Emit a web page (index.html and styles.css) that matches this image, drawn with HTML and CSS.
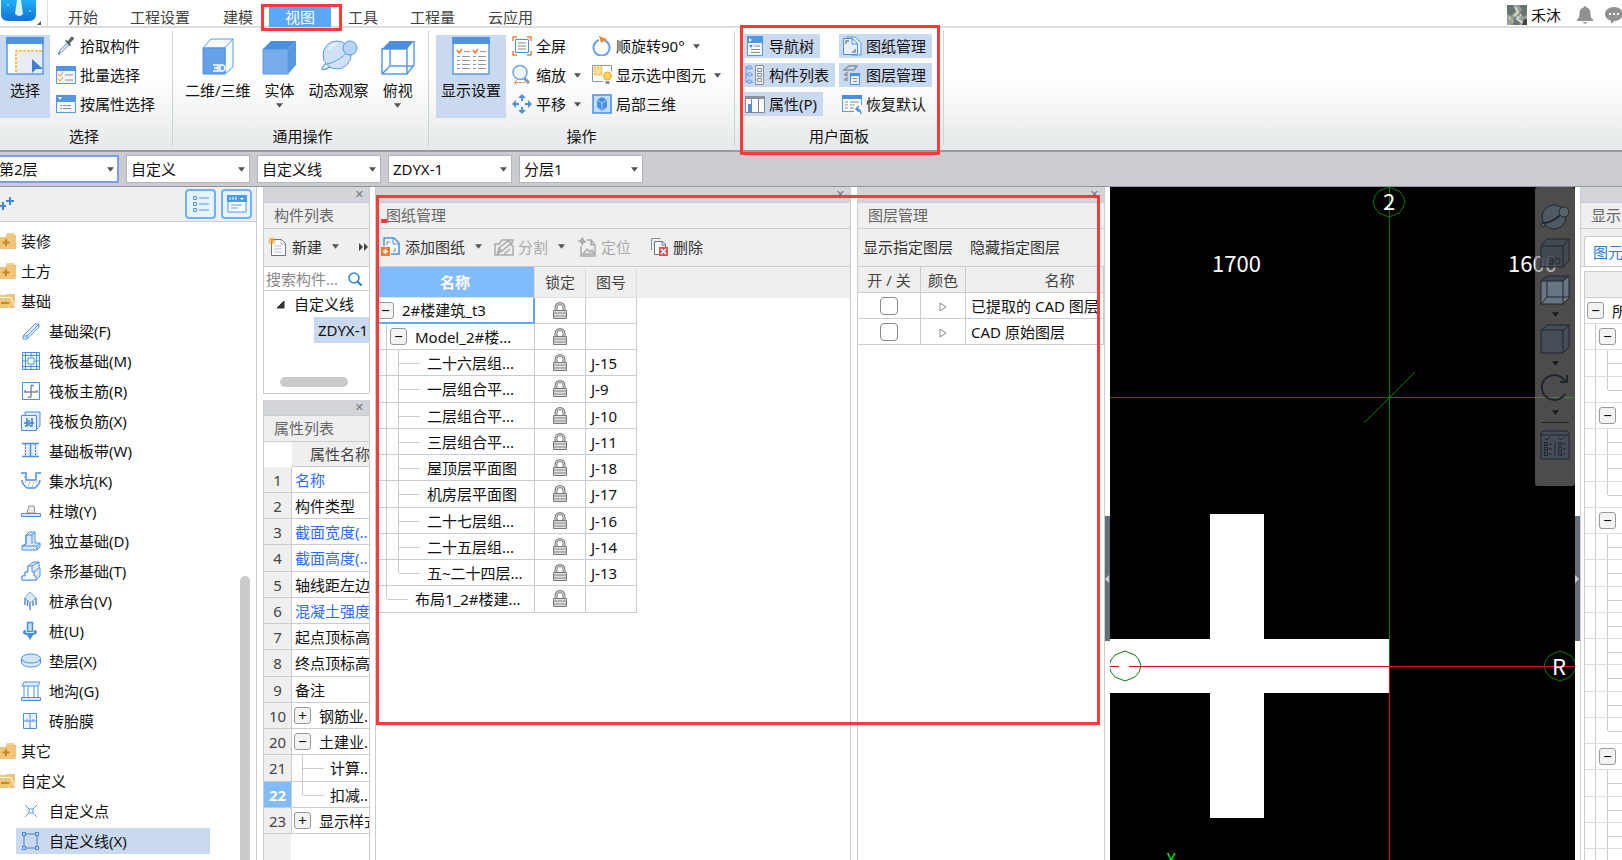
FILE: index.html
```html
<!DOCTYPE html>
<html lang="zh-CN">
<head>
<meta charset="utf-8">
<title>图纸管理</title>
<link rel="stylesheet" href="styles.css">
</head>
<body>
<svg class="defs" aria-hidden="true">
  <symbol id="caret" viewBox="0 0 8 5"><path d="M0 0h8L4 5z" fill="#555"/></symbol>
  <symbol id="lock" viewBox="0 0 16 18"><path d="M4 9V5.500a4 4 0 0 1 8 0V9" fill="none" stroke="#777" stroke-width="3"/><path d="M4 9V5.500a4 4 0 0 1 8 0V9" fill="none" stroke="#e8e8e8" stroke-width="1"/><path d="M1.500 8.500h13v8h-13z" fill="#ddd" stroke="#777"/><path d="M2 11h12M2 14h12" stroke="#888"/></symbol>
  <symbol id="folder" viewBox="0 0 16 17"><path d="M7 0h7l1 2H6z" fill="#f1d08f"/><path d="M0 4h5l2-2h9v13q0 1-1 1H0z" fill="#efc679"/><path d="M6 6v7M2.500 9.500h7" stroke="#c28a28" stroke-width="2"/></symbol>
  <symbol id="folder-open" viewBox="0 0 16 17"><path d="M0 2h6l1-1h8v14H0z" fill="#efc679"/><path d="M0 4.500h11l4 9" fill="none" stroke="#fff"/><path d="M1 10h8" stroke="#c28a28" stroke-width="2"/></symbol>
  <symbol id="orbit" viewBox="0 0 38 32"><path d="M8 22C0 28 0 32 8 28 18 24 28 16 33 10" fill="none" stroke="#6fa7e2" stroke-width="1.500"/><circle cx="17" cy="15" r="14" fill="#cfe2f8" stroke="#5a9ae0"/><path d="M7 24C17 22 26 15 30 8" fill="none" stroke="#5a9ae0"/><circle cx="30" cy="8" r="7" fill="#b7d4f5" stroke="#5a9ae0"/><path d="M9 10q3-6 8-6" stroke="#fff" stroke-width="2" fill="none" opacity=".7"/></symbol>
</svg>

<header class="titlebar">
  <div class="logo"><svg width="46" height="27" viewBox="0 0 46 27"><defs><linearGradient id="lg" x1="0" y1="0" x2="0" y2="1"><stop offset="0" stop-color="#1fb0f5"/><stop offset="1" stop-color="#1270d8"/></linearGradient></defs><path d="M1 0h35v14q0 7-7 7H8q-7 0-7-7z" fill="url(#lg)"/><path d="M17 0h4l2 14q-3 4-8 0z" fill="#d9f1ff"/><circle cx="8" cy="5" r="1" fill="#7fd4ff"/><circle cx="30" cy="11" r="1" fill="#7fd4ff"/><path d="M41 21v4h-4z" fill="#555"/></svg></div>
  <nav class="tabs">
    <button class="tab">开始</button>
    <button class="tab">工程设置</button>
    <button class="tab">建模</button>
    <button class="tab active">视图<span class="mark mark-tab"></span></button>
    <button class="tab">工具</button>
    <button class="tab">工程量</button>
    <button class="tab">云应用</button>
  </nav>
  <div class="user">
    <svg width="20" height="20" viewBox="0 0 20 20"><path fill="#96a098" d="M0 0h20v20H0z"/><path d="M0 0h6l3 6-5 5-4-2zM12 0l3 5-3 3 5 4 3-3V0zM7 12l5 2 1 6H6z" fill="#68756f"/><path d="M8 2l3 5-4 4M14 9l-4 5 6 4M2 12l4 5" stroke="#d5dbd2" stroke-width="2" fill="none"/><path d="M3 12l4 3-3 3zM9 9h4v3z" fill="#a8a57c"/><path d="M17 14h3v6h-5z" fill="#3d4742"/></svg>
    <span class="user-name">禾沐</span>
    <button class="plain" aria-label="通知"><svg width="16" height="18" viewBox="0 0 16 18"><path d="M8 0q1.500 0 1.500 1.500C13 2.500 13.500 5 13.500 8q0 4 2.500 5.500V15H0v-1.500Q2.500 12 2.500 8c0-3 .5-5.500 4-6.500Q6.500 0 8 0zM5.500 16h5Q8 19.500 5.500 16z" fill="#919191"/></svg></button>
    <button class="plain chat" aria-label="消息"><svg width="17" height="18" viewBox="0 0 17 18"><path d="M9 1c5 0 9 3 9 7s-4 7-9 7l-3 3v-3.500C2.500 14 0 11 0 8c0-4 4-7 9-7z" fill="#919191"/><path d="M4 8h2M8 8h2M12 8h2" stroke="#fff" stroke-width="2"/></svg></button>
  </div>
</header>

<section class="ribbon">
  <div class="group g-select">
    <div class="group-body">
      <button class="big on big-select"><svg width="38" height="38" viewBox="0 0 38 38"><path d="M1 1h36v36H1z" fill="#fff" stroke="#5b9ae2" stroke-width="1.500"/><path d="M0 0h38v7H0z" fill="#4f93e3"/><path d="M11 15h25v21H11z" fill="#e8ecf6"/><path d="M10 35V14h26" fill="none" stroke="#f7b21c" stroke-width="1.500" stroke-dasharray="3 1"/><path d="M26 22v14l4-4h7z" fill="#3d82d3"/></svg><span>选择</span></button>
      <div class="stack">
        <button class="small"><svg width="20" height="20" viewBox="0 0 20 20"><path d="M3 17l1-3 7-7 2 2-7 7z" fill="#cfe0f3" stroke="#7f9fc0"/><path d="M9 5l1-1 2 1 3-4q3-1 3 2l-4 4 1 2-1 1z" fill="#59636e"/><path d="M2 18l2-1" stroke="#4a90e2" stroke-width="2"/></svg>拾取构件</button>
        <button class="small"><svg width="20" height="18" viewBox="0 0 20 18"><path d="M.5.5h19v17H.5z" fill="#f4f6f8" stroke="#5b9ae2"/><path d="M0 0h20v5H0z" fill="#5396e5"/><path d="M2 8l2 2 3-4M2 13l2 2 3-4" fill="none" stroke="#f08a2c"/><path d="M9 9h8M9 14h8" stroke="#8a8f96"/></svg>批量选择</button>
        <button class="small"><svg width="20" height="18" viewBox="0 0 20 18"><path d="M.5.5h19v17H.5z" fill="#f4f6f8" stroke="#5b9ae2"/><path d="M0 0h20v7H0z" fill="#5396e5"/><path d="M2 2h4L4 5z" fill="#fff"/><path d="M4 10.500h2M7 10.500h8M4 13.500h2M7 13.500h8" stroke="#8a8f96"/></svg>按属性选择</button>
      </div>
    </div>
    <h2>选择</h2>
  </div>

  <div class="group g-common">
    <div class="group-body">
      <button class="big"><svg width="38" height="38" viewBox="0 0 38 38"><path d="M12 2L4 11h22v26l8-7V2z" fill="#f4f9ff" stroke="#5b9ae2"/><path d="M4 11h22v26H4z" fill="#65a2ea" stroke="#4a90e2"/><path d="M26 11l8-9" stroke="#5b9ae2"/><path d="M14 28h5v6h-5M15 31h4M21 28h2q3 0 3 3t-3 3h-2z" fill="none" stroke="#fff" stroke-width="1.500"/></svg><span>二维/三维</span></button>
      <button class="big"><svg width="38" height="38" viewBox="0 0 38 38"><path d="M2 12h25v25H2z" fill="#78adec" stroke="#5a99e0"/><path d="M2 12l8-8h25l-8 8z" fill="#4a8fdf"/><path d="M27 12l8-8v24l-8 9z" fill="#5797e2"/></svg><span>实体</span><svg class="caret"><use href="#caret"/></svg></button>
      <button class="big"><svg width="38" height="38" viewBox="0 -3 38 38"><use href="#orbit" width="38" height="32"/></svg><span>动态观察</span></button>
      <button class="big"><svg width="38" height="38" viewBox="0 0 38 38"><path d="M3 12h25v25H3zM28 37l7-9V4M3 37l8-8h24M11 12v17" fill="none" stroke="#5b9ae2" stroke-width="1.500"/><path d="M3 12l8-8h24l-7 8z" fill="#4a8fdf"/></svg><span>俯视</span><svg class="caret"><use href="#caret"/></svg></button>
    </div>
    <h2>通用操作</h2>
  </div>

  <div class="group g-op">
    <div class="group-body">
      <button class="big on big-display"><svg width="38" height="38" viewBox="0 0 38 38"><path d="M1 1h36v36H1z" fill="#fdfdfd" stroke="#5b9ae2" stroke-width="1.500"/><path d="M0 0h38v7H0z" fill="#4f93e3"/><path d="M5 13l2 3 3-4M21 13l2 3 3-4" stroke="#f0813c" fill="none" stroke-width="1.500"/><path d="M12 14.500h6M28 14.500h6M5 19.500h3M10 19.500h8M21 19.500h3M26 19.500h8M5 23.500h3M10 23.500h8M21 23.500h3M26 23.500h8M5 27.500h3M10 27.500h8M21 27.500h3M26 27.500h8M5 31.500h3M10 31.500h8M21 31.500h3M26 31.500h8" stroke="#999"/></svg><span>显示设置</span></button>
      <div class="stack">
        <button class="small"><svg width="20" height="20" viewBox="0 0 20 20"><path d="M1 5V1h4M15 1h4v4M19 15v4h-4M5 19H1v-4" fill="none" stroke="#f0813c" stroke-width="1.500"/><path d="M3.500 3.500h13v13h-13z" fill="#fff" stroke="#4a90e2"/><path d="M6 7h8M6 10h8M6 13h8" stroke="#888"/></svg>全屏</button>
        <button class="small"><svg width="20" height="20" viewBox="0 0 20 20"><path d="M12 13l5 5" stroke="#8c949c" stroke-width="3"/><circle cx="8" cy="7.500" r="7" fill="#eef5fd" stroke="#6da7e6" stroke-width="1.500"/><path d="M3 17.500h10M5 15l-3 2.500L5 20" fill="none" stroke="#f0813c" stroke-dasharray="3 1"/></svg>缩放<svg class="caret"><use href="#caret"/></svg></button>
        <button class="small"><svg width="20" height="20" viewBox="0 0 20 20"><path d="M10 0l4 4H6zM10 20l4-4H6zM0 10l4-4v8zM20 10l-4-4v8z" fill="#4a90e2"/><path d="M10 3v4M10 13v4M3 10h4M13 10h4" stroke="#4a90e2" stroke-width="2"/></svg>平移<svg class="caret"><use href="#caret"/></svg></button>
      </div>
      <div class="stack stack-rotate">
        <button class="small"><svg width="20" height="20" viewBox="0 0 20 20"><path d="M12 4a8 8 0 1 1-5 0" fill="none" stroke="#6aa5e6" stroke-width="2"/><path d="M7 0l8 3-6 4z" fill="#f58a1f"/></svg>顺旋转90°<svg class="caret"><use href="#caret"/></svg></button>
        <button class="small"><svg width="20" height="20" viewBox="0 0 20 20"><path d="M.5.500v16h11M.5.500h19v6" fill="none" stroke="#8a9aac"/><path d="M2 2h8v8H2z" fill="#fddc92" stroke="#f7b21c" stroke-dasharray="2 1"/><circle cx="15.500" cy="11" r="4" fill="#fbd45c" stroke="#f0a91c"/><path d="M13.500 16h4v3h-4z" fill="#8a8f96"/></svg>显示选中图元<svg class="caret"><use href="#caret"/></svg></button>
        <button class="small"><svg width="20" height="20" viewBox="0 0 20 20"><path d="M1 1h18v18H1z" fill="#c4dcf6" stroke="#4a90e2" stroke-width="1.500"/><path d="M10 3l5 3v7l-5 4-5-4V6z" fill="#4a90e2"/><path d="M5 6l5 3 5-3M10 9v8" stroke="#a8ccf5" fill="none"/></svg>局部三维</button>
      </div>
    </div>
    <h2>操作</h2>
  </div>

  <div class="group g-user">
    <div class="group-body">
      <div class="stack">
        <button class="small on"><svg width="20" height="20" viewBox="0 0 20 20"><path d="M2.500.5h15v19h-15z" fill="#f4f6f8" stroke="#5b9ae2"/><path d="M2 0h16v7H2z" fill="#5396e5"/><path d="M4 2l3 2-3 2z" fill="#fff"/><path d="M4 9h4l-2 3z" fill="#4a90e2"/><path d="M9 10h6M6 13.500h9M6 16.500h9" stroke="#8a8f96"/></svg>导航树</button>
        <button class="small on"><svg width="20" height="20" viewBox="0 0 20 20"><path d="M1 1v16M1 3h7M1 10h7M1 17h7" stroke="#5b9ae2" fill="none"/><path d="M3 1h3v3H3zM3 8h3v3H3zM3 15h3v3H3z" fill="#d9e8fa" stroke="#5b9ae2"/><path d="M10.500.5h8v19h-8z" fill="#e9eef4" stroke="#8a929c"/><path d="M12.500 3.500h4v3h-4zM12.500 8.500h4v3h-4zM12.500 13.500h4v3h-4z" fill="none" stroke="#8a929c"/></svg>构件列表</button>
        <button class="small on"><svg width="20" height="20" viewBox="0 0 20 20"><path d="M.5 2.500h19v16H.5z" fill="#f8f8f8" stroke="#7f8790"/><path d="M0 2h20v3H0z" fill="#8a929c"/><path d="M6.500 5v14M13.500 5v14" stroke="#7f8790"/><path d="M3 10h3v8H3z" fill="#4a90e2"/></svg>属性(P)</button>
      </div>
      <div class="stack stack-right">
        <button class="small on"><svg width="20" height="20" viewBox="0 0 20 20"><path d="M4 1h9l6 6v12H9" fill="#e6effa" stroke="#5b9ae2"/><path d="M1.500 2.500h9l5 5v11h-14z" fill="#e6effa" stroke="#4a90e2"/><path d="M4 8V5h3M13 13v3h-3" fill="none" stroke="#7b8794" stroke-width="1.500"/><path d="M10 2v6h6" fill="none" stroke="#4a90e2"/></svg>图纸管理</button>
        <button class="small on"><svg width="20" height="20" viewBox="0 0 20 20"><path d="M2 5l5-4h8l-3 4zM2 10l4-3M2 15l4-3M2 5h6M2 10h4M2 15h4" fill="none" stroke="#8a929c" stroke-width="1.500"/><path d="M8.500 8.500h9v11h-9z" fill="#eef5fd" stroke="#4a90e2"/><path d="M8 8h10v3H8zM11 13h4v1h-4zM11 16h4v1h-4z" fill="#4a90e2"/></svg>图层管理</button>
        <button class="small"><svg width="20" height="20" viewBox="0 0 20 20"><path d="M.5 1.500h19v16H.5z" fill="#f8fbff" stroke="#5b9ae2"/><path d="M0 1h20v4H0z" fill="#4a90e2"/><path d="M3 8h3M8 8h9M3 11h3M8 11h5M3 14h3M8 14h4" stroke="#8a8f96"/><path d="M12 11h8v9h-8z" fill="#fff"/><path d="M19 20q0-5-5-5M17 12l-3 3 3 3" fill="none" stroke="#4a90e2" stroke-width="1.500"/></svg>恢复默认</button>
      </div>
    </div>
    <h2>用户面板</h2>
    <span class="mark mark-user"></span>
  </div>
</section>

<section class="combos">
  <label class="combo focus"><select aria-label="楼层"><option>第2层</option></select><svg class="caret"><use href="#caret"/></svg></label>
  <label class="combo"><select aria-label="类别"><option>自定义</option></select><svg class="caret"><use href="#caret"/></svg></label>
  <label class="combo"><select aria-label="构件类型"><option>自定义线</option></select><svg class="caret"><use href="#caret"/></svg></label>
  <label class="combo"><select aria-label="构件"><option>ZDYX-1</option></select><svg class="caret"><use href="#caret"/></svg></label>
  <label class="combo"><select aria-label="分层"><option>分层1</option></select><svg class="caret"><use href="#caret"/></svg></label>
</section>

<main class="workspace">
  <aside class="nav">
    <div class="nav-tools">
      <svg class="plus" width="14" height="14" viewBox="0 0 14 14"><path d="M10 0v8M6 4h8M3 5v8M0 9h6" stroke="#3f87da" stroke-width="2"/></svg>
      <button class="view-btn" aria-label="列表视图"><svg width="18" height="18" viewBox="0 0 18 18"><path d="M1.500 1.500h3v3h-3zM1.500 7.500h3v3h-3zM1.500 13.500h3v3h-3zM7 3h10M7 9h10M7 15h10" fill="none" stroke="#4a9af0"/></svg></button>
      <button class="view-btn" aria-label="面板视图"><svg width="20" height="18" viewBox="0 0 20 18"><path d="M1 1h18v16H1z" fill="#fff" stroke="#4a9af0"/><path d="M0 0h20v7H0z" fill="#4a9af0"/><path d="M3 2v3M6 2v3M9 2v3" stroke="#fff"/><path d="M13 3h4l-2 2z" fill="#fff"/><path d="M4 10h11M4 13h7" stroke="#4a9af0"/></svg></button>
    </div>
    <ul class="nav-list">
      <li class="cat"><svg><use href="#folder"/></svg>装修</li>
      <li class="cat"><svg><use href="#folder"/></svg>土方</li>
      <li class="cat"><svg><use href="#folder-open"/></svg>基础</li>
      <li><svg viewBox="0 0 20 20"><path d="M2 15L14 3h4v3L6 18H2zM2 15h4v3M6 15L18 3" fill="#e4effb" stroke="#5b9ae2"/></svg>基础梁(F)</li>
      <li><svg viewBox="0 0 20 20"><path d="M1.500 1.500h17v17h-17zM4.500 1v18M15.500 1v18M1 4.500h18M1 15.500h18M10 1v5M10 14v5M1 10h5M14 10h5" fill="#f2f7fd" stroke="#4a90e2"/><path d="M7 7h6v6H7z" fill="#fff" stroke="#4a90e2"/></svg>筏板基础(M)</li>
      <li><svg viewBox="0 0 20 20"><path d="M1.500 1.500h17v17h-17z" fill="#fff" stroke="#4a90e2"/><path d="M4 9v2h12V9M13 5q-3-2-3 1v9q0 2-3 1" fill="none" stroke="#7f8790" stroke-width="1.500"/></svg>筏板主筋(R)</li>
      <li><svg viewBox="0 0 20 20"><path d="M4 4V1h15v14l-3 3" fill="#dce9f8" stroke="#4a90e2"/><path d="M.5 4.500h15v15H.5z" fill="#e9f2fc" stroke="#4a90e2"/><path d="M3 12h4M9 12h4M6 7v8H4M11 7v8H9M8 9v6" fill="none" stroke="#3b80d0" stroke-width="1.500"/></svg>筏板负筋(X)</li>
      <li><svg viewBox="0 0 20 20"><path d="M3 3h14v12H3z" fill="#e3eefa"/><path d="M1 2.500h17M1 15.500h17M9.500 3v12" stroke="#4a90e2" stroke-width="1.500"/><path d="M4.500 3v12M14.500 3v12" stroke="#6a7a8c" stroke-dasharray="2 1"/></svg>基础板带(W)</li>
      <li><svg viewBox="0 0 20 20"><path d="M0 2h5v7h10V2h5M1 9q0 4 5 8h8q5-4 5-8" fill="none" stroke="#4a90e2" stroke-width="1.500"/><path d="M4 11h1M8 12h1M12 12h1M15 11h1M7 14h1M11 15h1M3 6h1" stroke="#6a7a8c"/></svg>集水坑(K)</li>
      <li><svg viewBox="0 0 20 20"><path d="M8 5h5l1 7H6z" fill="#eee" stroke="#8a929c"/><path d="M.5 12.500h19v3H.5z" fill="#d5e6f9" stroke="#4a90e2"/></svg>柱墩(Y)</li>
      <li><svg viewBox="0 0 20 20"><path d="M5 13V4l3-3h6v11h5v4l-3 3H1v-4z" fill="#dbe9f9" stroke="#4a90e2"/><path d="M5 4h6v9M11 4l3-3M1 15h15v4M16 15l3-3M5 4v9l-4 2" fill="none" stroke="#4a90e2"/></svg>独立基础(D)</li>
      <li><svg viewBox="0 0 20 20"><path d="M1 19v-4h3v-4h3V5l5-4h6v5l1 1v8l-4 4z" fill="#dbe9f9" stroke="#4a90e2"/><path d="M1 19v-4h3v-4h3V5h4v6h2v4h2v4z" fill="#fff" stroke="#4a90e2"/><path d="M11 5l7-4M13 11l5-4" fill="none" stroke="#4a90e2"/></svg>条形基础(T)</li>
      <li><svg viewBox="0 0 20 20"><path d="M9 1l6 6-6 5-5-5z" fill="#dbe9f9" stroke="#7aa9e0"/><path d="M4 7v7M6.500 9v6M9 12v7M12 10v5M15 7v7" stroke="#5b8fce" stroke-width="1.500"/></svg>桩承台(V)</li>
      <li><svg viewBox="0 0 20 20"><path d="M6.500 1.500h5v9h-5z" fill="#c5dcf6" stroke="#4a90e2" stroke-width="1.500"/><path d="M2 11q0-2 3-2v3h8V9q3 0 3 2-1 3-4 3l-3 5-3-5q-4 0-4-3z" fill="#4a90e2"/></svg>桩(U)</li>
      <li><svg viewBox="0 0 20 20"><path d="M.5 8v4q2 4 9.500 4t9.500-4V8" fill="#dbe9f9" stroke="#4a90e2"/><ellipse cx="10" cy="7.500" rx="9.500" ry="4.500" fill="#d3e5f9" stroke="#4a90e2"/></svg>垫层(X)</li>
      <li><svg viewBox="0 0 20 20"><path d="M3 1h16l-2 4H1zM3 5v12M7 5v12M13 5v12M17 5v12" fill="#e3eefa" stroke="#4a90e2"/><path d="M.5 16.500h19v3H.5z" fill="#d5e6f9" stroke="#4a90e2"/></svg>地沟(G)</li>
      <li><svg viewBox="0 0 20 20"><path d="M2.500 2.500h13v15h-13zM2.500 10h13M9 2v8M9 10v8" fill="#eef5fd" stroke="#4a90e2"/><path d="M5 9h2M11 9h2" stroke="#4a90e2"/></svg>砖胎膜</li>
      <li class="cat"><svg><use href="#folder"/></svg>其它</li>
      <li class="cat"><svg><use href="#folder-open"/></svg>自定义</li>
      <li><svg viewBox="0 0 20 20"><path d="M8 8h4v4H8zM4 4l4 4M16 4l-4 4M4 16l4-4M16 16l-4-4" fill="none" stroke="#5b9ae2"/></svg>自定义点</li>
      <li class="selected"><svg viewBox="0 0 20 20"><path d="M3 3h13v14H3z" fill="none" stroke="#4a7fc4"/><path d="M1.500 1.500h3v3h-3zM14.500 1.500h3v3h-3zM1.500 15.500h3v3h-3zM14.500 15.500h3v3h-3z" fill="#cfe2f8" stroke="#3b80d0"/></svg>自定义线(X)</li>
    </ul>
    <div class="vscroll"></div>
  </aside>

  <div class="side">
    <section class="panel members">
      <div class="grip"><button class="close" aria-label="关闭">✕</button></div>
      <h3>构件列表</h3>
      <div class="tools">
        <button class="tool"><svg width="20" height="20" viewBox="0 0 20 20"><path d="M3.500 2.500h10l4 4v12h-14z" fill="#fdfdfd" stroke="#6d757e"/><path d="M13 3v4h4M6 9h8M6 12h8M6 15h8" fill="none" stroke="#b8bec5"/><path d="M4 0v8M0 4h8M1 1l6 6M7 1L1 7" stroke="#f59a22"/></svg>新建<svg class="caret"><use href="#caret"/></svg></button>
        <svg class="more" width="10" height="8" viewBox="0 0 10 8"><path d="M0 0l4 4-4 4zM5 0l4 4-4 4z" fill="#444"/></svg>
      </div>
      <div class="search"><input type="text" placeholder="搜索构件..." aria-label="搜索构件"><svg width="14" height="14" viewBox="0 0 14 14"><circle cx="6" cy="6" r="5" fill="none" stroke="#2f86cc" stroke-width="1.500"/><path d="M9 9l5 5" stroke="#2f86cc" stroke-width="2"/></svg></div>
      <ul class="member-tree">
        <li><svg width="9" height="9" viewBox="0 0 9 9"><path d="M8 1v7H1z" fill="#333" stroke="#333"/></svg>自定义线</li>
        <li class="child"><span>ZDYX-1</span></li>
      </ul>
      <div class="hscroll"></div>
    </section>
    <section class="panel props">
      <div class="grip"><button class="close" aria-label="关闭">✕</button></div>
      <h3>属性列表</h3>
      <table class="prop-table">
        <thead><tr><th></th><th>属性名称</th></tr></thead>
        <tbody>
          <tr><td>1</td><td class="blue">名称</td></tr>
          <tr><td>2</td><td>构件类型</td></tr>
          <tr><td>3</td><td class="blue">截面宽度(..</td></tr>
          <tr><td>4</td><td class="blue">截面高度(..</td></tr>
          <tr><td>5</td><td>轴线距左边</td></tr>
          <tr><td>6</td><td class="blue">混凝土强度</td></tr>
          <tr><td>7</td><td>起点顶标高</td></tr>
          <tr><td>8</td><td>终点顶标高</td></tr>
          <tr><td>9</td><td>备注</td></tr>
          <tr><td>10</td><td><div class="node"><button class="toggle" aria-label="展开">+</button>钢筋业..</div></td></tr>
          <tr><td>20</td><td><div class="node"><button class="toggle" aria-label="折叠">−</button>土建业..</div></td></tr>
          <tr><td>21</td><td><div class="node"><i class="branch"></i>计算..</div></td></tr>
          <tr class="current"><td>22</td><td><div class="node"><i class="branch last"></i>扣减..</div></td></tr>
          <tr><td>23</td><td><div class="node"><button class="toggle" aria-label="展开">+</button>显示样式</div></td></tr>
        </tbody>
      </table>
      <div class="prop-rest"></div>
    </section>
  </div>

  <div class="docks">
    <section class="panel drawings">
      <div class="grip"><button class="close" aria-label="关闭">✕</button></div>
      <h3>图纸管理</h3>
      <div class="tools">
        <button class="tool"><svg width="20" height="20" viewBox="0 0 20 20"><path d="M3 9V1h10l5 5v11h-8" fill="#f4f9ff" stroke="#4a90e2" stroke-width="1.500"/><path d="M12 1v6h6" fill="none" stroke="#4a90e2"/><path d="M6 8V5h3M14 11v3h-2" fill="none" stroke="#7b8794"/><path d="M0 10h9v9H0z" fill="#ef7d31"/><path d="M4.500 12v5M2 14.500h5" stroke="#fff" stroke-width="1.500"/></svg>添加图纸<svg class="caret"><use href="#caret"/></svg></button>
        <button class="tool off"><svg width="20" height="20" viewBox="0 0 20 20"><path d="M5 7H1v11h18V8M5 7l3-4h11l-2 6M4 15l1-4 9-7 3 2-9 8zM2 18l4-3M10 17l6-5M5 11l3 3" fill="none" stroke="#aaa" stroke-width="1.500"/></svg>分割<svg class="caret"><use href="#caret"/></svg></button>
        <button class="tool off"><svg width="20" height="20" viewBox="0 0 20 20"><path d="M4 9v10h14V8l-4-5h-4M14 3v5h4M6 17l4-5 3 3 2-2 2 4z" fill="none" stroke="#aaa" stroke-width="1.500"/><path d="M0 4l3-1 3-3 1 3 3 2-3 1-2 3-1-3z" fill="#aaa"/></svg>定位</button>
        <button class="tool"><svg width="20" height="20" viewBox="0 0 20 20"><path d="M2.500 13V1.500h9" fill="none" stroke="#8a929c"/><path d="M5.500 4.500h8l3 3v10h-11z" fill="#fafafa" stroke="#6d757e"/><path d="M13 5v3h3" fill="none" stroke="#6d757e"/><path d="M10 10h9v9h-9z" fill="#d9535a"/><path d="M12 12l5 5M17 12l-5 5" stroke="#fff" stroke-width="1.500"/></svg>删除</button>
      </div>
      <div class="table-wrap">
        <table class="draw-table">
          <thead><tr><th class="sorted">名称</th><th>锁定</th><th>图号</th></tr></thead>
          <tbody>
            <tr class="root"><td><div class="node"><button class="toggle" aria-label="折叠">−</button>2#楼建筑_t3</div></td><td><svg class="lock"><use href="#lock"/></svg></td><td></td></tr>
            <tr><td><div class="node"><i class="rail"></i><button class="toggle" aria-label="折叠">−</button>Model_2#楼...</div></td><td><svg class="lock"><use href="#lock"/></svg></td><td></td></tr>
            <tr><td><div class="node"><i class="rail"></i><i class="branch"></i>二十六层组...</div></td><td><svg class="lock"><use href="#lock"/></svg></td><td>J-15</td></tr>
            <tr><td><div class="node"><i class="rail"></i><i class="branch"></i>一层组合平...</div></td><td><svg class="lock"><use href="#lock"/></svg></td><td>J-9</td></tr>
            <tr><td><div class="node"><i class="rail"></i><i class="branch"></i>二层组合平...</div></td><td><svg class="lock"><use href="#lock"/></svg></td><td>J-10</td></tr>
            <tr><td><div class="node"><i class="rail"></i><i class="branch"></i>三层组合平...</div></td><td><svg class="lock"><use href="#lock"/></svg></td><td>J-11</td></tr>
            <tr><td><div class="node"><i class="rail"></i><i class="branch"></i>屋顶层平面图</div></td><td><svg class="lock"><use href="#lock"/></svg></td><td>J-18</td></tr>
            <tr><td><div class="node"><i class="rail"></i><i class="branch"></i>机房层平面图</div></td><td><svg class="lock"><use href="#lock"/></svg></td><td>J-17</td></tr>
            <tr><td><div class="node"><i class="rail"></i><i class="branch"></i>二十七层组...</div></td><td><svg class="lock"><use href="#lock"/></svg></td><td>J-16</td></tr>
            <tr><td><div class="node"><i class="rail"></i><i class="branch"></i>二十五层组...</div></td><td><svg class="lock"><use href="#lock"/></svg></td><td>J-14</td></tr>
            <tr><td><div class="node"><i class="rail"></i><i class="branch last"></i>五~二十四层...</div></td><td><svg class="lock"><use href="#lock"/></svg></td><td>J-13</td></tr>
            <tr><td><div class="node outer"><i class="branch last"></i>布局1_2#楼建...</div></td><td><svg class="lock"><use href="#lock"/></svg></td><td></td></tr>
          </tbody>
        </table>
      </div>
    </section>
    <section class="panel layers">
      <div class="grip"><button class="close" aria-label="关闭">✕</button></div>
      <h3>图层管理</h3>
      <div class="tools"><button class="tool">显示指定图层</button><button class="tool">隐藏指定图层</button></div>
      <table class="layer-table">
        <thead><tr><th>开 / 关</th><th>颜色</th><th>名称</th></tr></thead>
        <tbody>
          <tr><td><input type="checkbox" aria-label="已提取的 CAD 图层"></td><td><svg width="8" height="10" viewBox="0 0 8 10"><path d="M1 1l6 4-6 4z" fill="#fff" stroke="#888"/></svg></td><td>已提取的 CAD 图层</td></tr>
          <tr><td><input type="checkbox" aria-label="CAD 原始图层"></td><td><svg width="8" height="10" viewBox="0 0 8 10"><path d="M1 1l6 4-6 4z" fill="#fff" stroke="#888"/></svg></td><td>CAD 原始图层</td></tr>
        </tbody>
      </table>
    </section>
    <span class="mark mark-docks"></span>
    <span class="mark-dash"></span>
  </div>

  <div class="splitter"><button aria-label="收起左侧"><svg width="4" height="8" viewBox="0 0 4 8"><path d="M4 0v8L0 4z" fill="#cdd1d6"/></svg></button></div>

  <div class="canvas">
    <svg class="drawing" viewBox="0 0 465 673" preserveAspectRatio="xMinYMin slice">
      <path d="M0 452h100V327h54v125h125v54H154v125h-54V506H0z" fill="#fff"/>
      <path d="M279.500 0v480M0 210.500h465M254 236l51-51" stroke="#007d00" fill="none"/>
      <path d="M0 479.500h9M19 479.500h446M279.500 480v193" stroke="#f00000" fill="none"/>
      <g fill="none" stroke="#0a7d0a">
        <path id="ring" d="M279 0l10 4 4 5 2 6-2 6-4 5-10 4-10-4-4-5-2-6 2-6 4-5z"/>
        <use href="#ring" x="-264" y="464"/>
        <use href="#ring" x="171" y="464"/>
      </g>
      <g class="cad">
        <text x="273" y="23">2</text>
        <text x="102" y="85">1700</text>
        <text x="398" y="85">1600</text>
        <text x="442" y="488">R</text>
        <text class="axis" x="57" y="678">Y</text>
      </g>
    </svg>
    <div class="viewbar">
      <button aria-label="动态观察"><svg width="30" height="28" viewBox="0 0 30 28"><circle cx="14" cy="14" r="12" fill="#505a65" stroke="#20262e"/><path d="M1 22q2-3 4-2Q16 18 24 8" fill="none" stroke="#20262e" stroke-width="2"/><circle cx="24" cy="9" r="5" fill="#59636e" stroke="#20262e"/><circle cx="3" cy="22" r="2" fill="#59636e" stroke="#20262e"/></svg></button>
      <button aria-label="三维"><svg width="30" height="30" viewBox="0 0 30 30"><path d="M1 8l6-7h22v22l-6 6H1z" fill="#3f4751" opacity=".8"/><path d="M1 8l6-7h22v22l-6 6H1zM1 8h22v21M23 8l6-7" fill="none" stroke="#20262e"/><path d="M9 20h4v6H9M10 23h3M15 20h2q3 0 3 3t-3 3h-2z" fill="none" stroke="#20262e"/></svg></button>
      <button aria-label="俯视"><svg width="30" height="30" viewBox="0 0 30 30"><path d="M1 6l6-5h22v22l-6 6H1z" fill="#687684"/><path d="M1 6l6-5h22l-6 5z" fill="#3f4751"/><path d="M1 6l6-5h22v22l-6 6H1zM1 6h22v23M23 6l6-5M7 6v16h22M1 29l6-7" fill="none" stroke="#20262e"/></svg><svg class="caret dark"><use href="#caret"/></svg></button>
      <button aria-label="实体"><svg width="30" height="30" viewBox="0 0 30 30"><path d="M1 6l6-5h22v22l-6 6H1z" fill="#444d58"/><path d="M1 6l6-5h22v22l-6 6H1zM1 6h22v23M23 6l6-5" fill="none" stroke="#20262e"/></svg><svg class="caret dark"><use href="#caret"/></svg></button>
      <button aria-label="旋转"><svg width="30" height="30" viewBox="0 0 30 30"><path d="M25 21a12.500 12.500 0 1 1 0-13" fill="none" stroke="#20262e" stroke-width="2"/><path d="M20 9h7V2" fill="none" stroke="#20262e" stroke-width="2"/></svg><svg class="caret dark"><use href="#caret"/></svg></button>
      <hr>
      <button aria-label="显示设置"><svg width="30" height="30" viewBox="0 0 30 30"><path d="M1 3l2-2h24l2 2v26H1z" fill="#444d58" stroke="#20262e"/><path d="M1 5h28M15 12v14M5 8l2 2 3-3M19 8l2 2 3-3" fill="none" stroke="#20262e"/><path d="M4.500 12.500h3v3h-3zM4.500 17.500h3v3h-3zM4.500 22.500h3v3h-3zM18.500 12.500h3v3h-3zM18.500 17.500h3v3h-3zM18.500 22.500h3v3h-3zM9 14h3M9 19h3M9 24h3M23 14h3M23 19h3M23 24h3" fill="none" stroke="#20262e"/></svg></button>
    </div>
  </div>

  <div class="splitter"><button aria-label="收起右侧"><svg width="4" height="8" viewBox="0 0 4 8"><path d="M0 0v8l4-4z" fill="#cdd1d6"/></svg></button></div>

  <aside class="panel display">
    <div class="grip"></div>
    <h3>显示</h3>
    <div class="display-tabs"><button>图元</button></div>
    <div class="display-body">
      <div class="display-head"></div>
      <ul class="display-tree">
        <li class="node"><button class="toggle" aria-label="折叠">−</button>所</li>
        <li class="node"><i class="rail"></i><button class="toggle" aria-label="折叠">−</button></li>
        <li class="node"><i class="rail"></i><i class="branch"></i></li>
        <li class="node"><i class="rail"></i><i class="branch last"></i></li>
        <li class="node"><i class="rail"></i><button class="toggle" aria-label="折叠">−</button></li>
        <li class="node"><i class="rail"></i><i class="branch"></i></li>
        <li class="node"><i class="rail"></i><i class="branch"></i></li>
        <li class="node"><i class="rail"></i><i class="branch last"></i></li>
        <li class="node"><i class="rail"></i><button class="toggle" aria-label="折叠">−</button></li>
        <li class="node"><i class="rail"></i><i class="branch"></i></li>
        <li class="node"><i class="rail"></i><i class="branch"></i></li>
        <li class="node"><i class="rail"></i><i class="branch"></i></li>
        <li class="node"><i class="rail"></i><i class="branch"></i></li>
        <li class="node"><i class="rail"></i><i class="branch"></i></li>
        <li class="node"><i class="rail"></i><i class="branch"></i></li>
        <li class="node"><i class="rail"></i><i class="branch"></i></li>
        <li class="node"><i class="rail"></i><i class="branch last"></i></li>
        <li class="node"><i class="rail"></i><button class="toggle" aria-label="折叠">−</button></li>
        <li class="node"><i class="rail"></i><i class="branch"></i></li>
        <li class="node"><i class="rail"></i><i class="branch"></i></li>
        <li class="node"><i class="rail"></i><i class="branch"></i></li>
        <li class="node"><i class="rail"></i><i class="branch"></i></li>
      </ul>
    </div>
  </aside>
</main>
</body>
</html>
```

FILE: styles.css
```css
:root {
  --line: #c9ccd1;
  --line-soft: #dcdee1;
  --face: #efefef;
  --pick: #c9d9f0;
  --blue: #80bbfb;
  --mark: #fd3a3a;
}

* { box-sizing: border-box; }

body {
  margin: 0;
  height: 100vh;
  display: flex;
  flex-direction: column;
  overflow: hidden;
  background: #fff;
  color: #111;
  font: 15px/20px "Noto Sans", "Noto Sans CJK SC", sans-serif;
}

button, input, select { font: inherit; color: inherit; }
button { background: none; border: 0; padding: 0; white-space: nowrap; }
h2, h3, ul { margin: 0; padding: 0; font-weight: normal; font-size: 15px; list-style: none; }
svg { flex: none; }
i { font-style: normal; }

.defs { position: absolute; width: 0; height: 0; }
.caret { width: 7px; height: 5px; }

.mark { position: absolute; border: 3px solid var(--mark); pointer-events: none; z-index: 5; }

/* title bar */
.titlebar { display: flex; height: 28px; flex: none; border-bottom: 2px solid #dedede; color: #444; }
.logo { width: 48px; height: 27px; border-right: 1px solid #ddd; }
.tabs { display: flex; padding: 7px 0 0 4px; }
.tab { position: relative; height: 20px; padding: 0 16px 2px; }
.tab:nth-child(2n) { margin-right: 1px; }
.tab.active { background: #59a7f7; color: #fff; }
.mark-tab { inset: -3px -11px -4px -8px; }
.user { display: flex; align-items: center; margin-left: auto; padding-top: 3px; color: #111; }
.user-name { margin: 0 16px 0 4px; }
.plain { display: flex; }
.chat { margin-left: 12px; }

/* ribbon */
.ribbon { display: flex; height: 124px; flex: none; padding: 3px 0 4px; background: linear-gradient(#fff 40%, #e6e9e9); border-bottom: 2px solid #959b9f; }
.group { position: relative; display: flex; flex-direction: column; border-right: 1px solid #cfd2d4; }
.group-body { display: flex; padding-top: 4px; height: 95px; }
.group h2 { text-align: center; }
.g-select { width: 173px; }
.g-select h2 { padding-right: 4px; }
.g-common { width: 256px; }
.g-common h2 { padding-left: 4px; }
.g-op { width: 306px; }
.g-user { width: 209px; }
.g-op .group-body { padding-left: 7px; }
.g-user .group-body { padding-left: 9px; }
.g-common .group-body { padding-left: 5px; }

.big { display: flex; flex-direction: column; align-items: center; flex: none; height: 83px; padding: 2px 7px 0; }
.big > span { margin-top: 5px; }
.big .caret { margin-top: 3px; }
.g-common .big > svg:first-child { margin: 0 -4px; }
.on { background: var(--pick); }
.big-select { width: 50px; padding: 2px 0 0; }
.big-display { width: 70px; padding: 2px 0 0; }

.stack { display: flex; flex-direction: column; align-items: flex-start; gap: 5px; margin-top: -1px; padding-left: 6px; }
.stack-rotate { padding-left: 11px; }
.small { display: flex; align-items: center; gap: 4px; height: 24px; }
.small .caret { margin-left: 4px; }
.g-user .stack { padding-left: 0; }
.g-user .small { padding: 0 6px 0 1px; gap: 4px; }
.g-user .stack-right { margin-left: 4px; }
.g-user .stack-right .small { padding: 0 6px 0 3px; }
.mark-user { inset: -6px 3px -9px 5px; }

/* combo strip */
.combos { display: flex; gap: 7px; height: 35px; flex: none; padding: 3px 0; background: #caccd1; border-bottom: 1px solid #8e979b; }
.combo { position: relative; width: 124px; height: 28px; }
.combo select { width: 100%; height: 100%; appearance: none; background: #fff; border: 1px solid #b2b5b9; border-radius: 0; padding: 0 4px; }
.combo.focus { margin-left: -5px; }
.combo.focus select { border: 2px solid #7d9de6; padding: 0 3px 0 2px; }
.combo .caret { position: absolute; right: 5px; top: 12px; pointer-events: none; }

/* workspace */
.workspace { display: flex; flex: 1; min-height: 0; }

.nav { position: relative; width: 257px; flex: none; border-right: 1px solid var(--line); overflow: hidden; }
.nav-tools { display: flex; align-items: center; gap: 5px; height: 35px; padding: 0 4px 1px 0; background: var(--face); border-bottom: 1px solid var(--line); }
.plus { margin-right: auto; }
.view-btn { display: flex; align-items: center; justify-content: center; width: 31px; height: 30px; border: 2px solid #6db3f8; border-radius: 4px; background: #e9f3fe; }
.nav-list { padding-top: 2px; }
.nav-list li { display: flex; align-items: center; gap: 8px; height: 26px; margin: 4px 0 4px 16px; padding-left: 5px; width: 194px; }
.nav-list li svg { width: 20px; height: 20px; }
.nav-list .cat { margin-left: 0; padding-left: 0; gap: 5px; }
.nav-list .cat svg { width: 16px; height: 17px; }
.nav-list .selected { background: var(--pick); }
.vscroll { position: absolute; right: 6px; top: 389px; bottom: -10px; width: 10px; border-radius: 5px; background: #cbcbcb; }

.side { display: flex; flex-direction: column; gap: 6px; width: 107px; flex: none; margin-left: 6px; }
.panel { display: flex; flex-direction: column; min-width: 0; border: 1px solid var(--line); border-width: 0 1px; overflow: hidden; background: #fff; }
.grip { display: flex; align-items: center; justify-content: flex-end; height: 15px; flex: none; padding-right: 5px; background: #d2d4d9; }
.close { font: 11px/15px "DejaVu Sans", sans-serif; color: #777; }
h3 { height: 27px; flex: none; padding: 0 10px; line-height: 24px; white-space: nowrap; color: #666; background: var(--face); border: 1px solid var(--line); border-width: 1px 0; }
.tools { display: flex; align-items: center; height: 38px; flex: none; padding-bottom: 2px; background: var(--face); border-bottom: 1px solid var(--line); }
.tool { display: flex; align-items: center; gap: 4px; color: #333; }
.tool.off { color: #aaa; }
.tool .caret { margin-left: 6px; }

.members { height: 207px; flex: none; border-bottom-width: 1px; }
.members .tools { padding-left: 4px; }
.more { margin-left: auto; }
.search { display: flex; align-items: center; height: 24px; padding: 0 7px 0 2px; border-bottom: 1px solid var(--line); }
.search input { flex: 1; min-width: 0; border: 0; padding: 0; outline: 0; }
.search input::placeholder { color: #888; opacity: 1; }
.member-tree li { display: flex; align-items: center; gap: 9px; height: 26px; padding-left: 12px; white-space: nowrap; }
.member-tree .child { padding-left: 50px; }
.member-tree .child span { flex: 1; line-height: 26px; padding-left: 4px; background: var(--pick); overflow: hidden; }
.hscroll { width: 68px; height: 10px; margin: auto 0 6px 16px; border-radius: 5px; background: #cbcbcb; }

.props { flex: 1; }
table { border-spacing: 0; table-layout: fixed; }
th, td { padding: 0; height: 26px; font-weight: normal; white-space: nowrap; overflow: hidden; border: 1px solid var(--line); border-width: 0 1px 1px 0; }
tbody tr:nth-child(4n) td { height: 27px; }
th { background: var(--face); color: #444; }

.prop-table { width: 100%; }
.prop-table th { height: 25px; }
.prop-table th:first-child { width: 28px; background: #fff; border: 0; }
.prop-table th:last-child { padding-left: 18px; text-align: left; border-right: 0; }
.prop-table td:first-child { background: var(--face); text-align: center; color: #444; }
.prop-table td:last-child { padding-left: 3px; border-right: 0; }
.prop-table .blue { color: #2f6bff; }
.prop-table .current td:first-child { background: var(--blue); color: #fff; font-weight: bold; }
.prop-rest { flex: 1; width: 27px; background: var(--face); }

/* tree rows */
.node { display: flex; align-items: center; height: 100%; }
.toggle { flex: none; width: 17px; height: 17px; border: 1px solid #999; border-radius: 3px; background: #f3f3f3; line-height: 13px; text-align: center; margin-right: 8px; }
.rail { align-self: stretch; width: 12px; margin-left: 10px; border-left: 1px solid var(--line); flex: none; }
.branch { position: relative; align-self: stretch; width: 28px; flex: none; border-left: 1px solid var(--line); }
.branch::after { content: ""; position: absolute; left: 0; top: 50%; width: 21px; border-top: 1px solid var(--line); }
.branch.last { border-left-color: transparent; }
.branch.last::before { content: ""; position: absolute; left: -1px; top: 0; height: 50%; border-left: 1px solid var(--line); }
.rail + .toggle { margin-left: -8px; }
.prop-table .toggle { margin-left: -1px; }
.prop-table .branch { margin-left: 7px; }

/* docked panels */
.docks { position: relative; display: flex; gap: 6px; width: 730px; flex: none; margin-left: 5px; }
.drawings { flex: 1; }
.drawings .tools { padding-left: 5px; }
.drawings .tool + .tool { margin-left: 12px; }
.drawings .tool + .tool + .tool + .tool { margin-left: 18px; }
.table-wrap { background: linear-gradient(var(--face) 31px, #fff 31px); }
.draw-table { width: 261px; }
.draw-table th { height: 31px; border-color: var(--line-soft); }
.draw-table th:first-child { width: 159px; }
.draw-table th:nth-child(2) { width: 51px; }
.draw-table .sorted { background: var(--blue); color: #fff; font-weight: bold; }
.draw-table td:nth-child(2) { text-align: center; }
.draw-table td:last-child { padding-left: 5px; }
.draw-table .branch { width: 29px; }
.draw-table .root td:first-child { border: 2px solid #62a9f5; border-width: 0 2px 2px 0; }
.draw-table .root .toggle { margin-left: 1px; }
.draw-table .outer { padding-left: 10px; }
.lock { width: 16px; height: 18px; display: block; margin: 0 auto; }

.layers { width: 248px; flex: none; }
.layers .tools { gap: 17px; padding-left: 5px; }
.layer-table { width: 100%; }
.layer-table th:first-child { width: 63px; }
.layer-table th:nth-child(2) { width: 45px; }
.layer-table th:last-child { padding-left: 50px; }
.layer-table td { text-align: center; }
.layer-table td:last-child { text-align: left; padding-left: 5px; }
.layer-table input { appearance: none; display: block; width: 18px; height: 18px; margin: 0 auto; border: 1px solid #888; border-radius: 4px; background: #fff; }

.mark-docks { left: 1px; right: 5px; top: 8px; height: 530px; }
.mark-dash { position: absolute; left: 6px; top: 32px; width: 6px; height: 4px; background: var(--mark); }

.splitter { display: flex; width: 5px; flex: none; }
.splitter button { display: flex; align-items: center; width: 5px; height: 125px; margin-top: 329px; background: #66707c; }

/* model view */
.canvas { position: relative; flex: 1; min-width: 0; background: #000; overflow: hidden; }
.drawing { display: block; width: 100%; height: 100%; }
.cad text { font: 22px "Noto Sans CJK SC", sans-serif; fill: #fff; }
.cad .axis { font-size: 16px; fill: #0f0; }
.viewbar { position: absolute; top: 0; right: 0; width: 40px; display: flex; flex-direction: column; align-items: center; gap: 7px; padding: 16px 0 26px; background: rgba(127, 127, 127, .6); border-radius: 3px; }
.viewbar button { display: flex; flex-direction: column; align-items: center; gap: 7px; }
.viewbar hr { width: 28px; margin: 0; border: 0; border-top: 1px solid #20262e; }
.dark { filter: brightness(.3); }

.display { width: 42px; flex: none; border-right: 0; }
.display-tabs { height: 38px; padding: 7px 0 0 3px; background: var(--face); border-bottom: 1px solid var(--line); }
.display-tabs button { width: 100%; height: 30px; padding: 0 0 0 8px; text-align: left; background: #fff; border: 1px solid var(--line); border-width: 1px 0 0 1px; border-radius: 3px 0 0; color: #2b7de0; }
.display-body { flex: 1; margin: 4px 0 0 3px; border: 1px solid var(--line); border-right: 0; }
.display-head { height: 26px; background: var(--face); border-bottom: 1px solid var(--line); }
.display-tree { display: grid; grid-auto-rows: 26px 26px 27px 26px; }
.display-tree .node { white-space: nowrap; border-bottom: 1px solid var(--line-soft); }
.display-tree > .node > .toggle:first-child { margin-left: 2px; }
```
